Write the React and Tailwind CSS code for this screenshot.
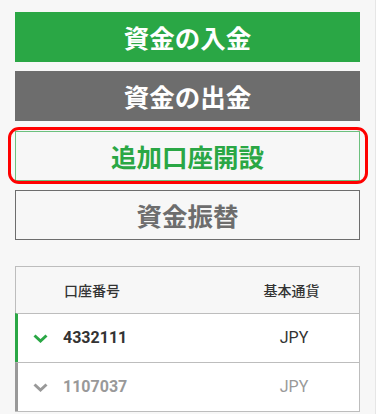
const FONT = { fontFamily: '"Noto Sans CJK JP", Roboto, "Liberation Sans", sans-serif' };

const accounts = [
  { no: "4332111", ccy: "JPY", active: true },
  { no: "1107037", ccy: "JPY", active: false },
];

function Chevron({ color }) {
  return (
    <svg width="15" height="9" viewBox="0 0 15 9" fill="none">
      <path d="M1.5 1.5 L7.5 7 L13.5 1.5" stroke={color} strokeWidth="3" />
    </svg>
  );
}

export default function App() {
  return (
    <div className="w-[376px] h-[414px] overflow-hidden bg-[#f7f7f7] border-r border-[#e6e6e6]" style={FONT}>
      <div className="pl-[15px] pr-[15px] pt-[12px] flex flex-col">
        <button className="h-[50px] bg-[#2aa745] text-white font-bold text-[25.5px] leading-none">
          資金の入金
        </button>
        <button className="mt-[9px] h-[50px] bg-[#6d6d6d] text-white font-bold text-[25.5px] leading-none">
          資金の出金
        </button>
        <div className="relative mt-[10px]">
          <button className="w-full h-[50px] border border-[#6cc07e] text-[#2aa745] font-bold text-[25.5px] leading-none">
            追加口座開設
          </button>
          <div className="absolute -left-[7px] -right-[8px] -top-[4px] -bottom-[3px] border-[3px] border-[#ff0000] rounded-[11px] pointer-events-none" />
        </div>
        <button className="mt-[9px] h-[50px] border border-[#6d6d6d] text-[#6d6d6d] font-bold text-[25.5px] leading-none">
          資金振替
        </button>

        <div className="mt-[26px] border border-[#bdbdbd]">
          <div className="h-[46px] flex items-center text-[14px] font-medium text-[#333]">
            <div className="pl-[48px] w-[210px]">口座番号</div>
            <div className="flex-1 text-center pr-[2px]">基本通貨</div>
          </div>
          {accounts.map((a) => (
            <div
              key={a.no}
              className={`h-[49px] flex items-center bg-white border-t border-[#bdbdbd] border-l-[3px] -ml-px ${a.active ? "border-l-[#2aa745]" : "border-l-[#999999]"}`}
            >
              <div className="w-[211px] flex items-center pl-[15px]">
                <Chevron color={a.active ? "#2aa745" : "#999999"} />
                <span
                  className={`ml-[15px] text-[16px] font-bold ${a.active ? "text-[#333]" : "text-[#999]"}`}
                  style={{ fontFamily: 'Roboto, "Liberation Sans", sans-serif' }}
                >
                  {a.no}
                </span>
              </div>
              <div
                className={`flex-1 text-center text-[16px] ${a.active ? "text-[#333]" : "text-[#999]"}`}
                style={{ fontFamily: 'Roboto, "Liberation Sans", sans-serif' }}
              >
                {a.ccy}
              </div>
            </div>
          ))}
        </div>
      </div>
    </div>
  );
}
